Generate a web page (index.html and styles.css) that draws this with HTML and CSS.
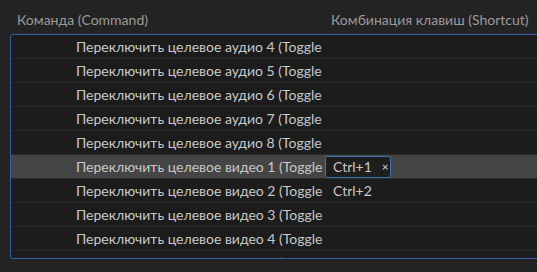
FILE: index.html
```html
<!DOCTYPE html>
<html lang="ru">
<head>
    <meta charset="UTF-8">
    <title>Комбинации клавиш</title>
    <link rel="stylesheet" href="styles.css">
</head>
<body>
    <div class="cabecalho">
        <div class="col-comando">Команда (Command)</div>
        <div class="col-atalho">Комбинация клавиш (Shortcut)</div>
    </div>

    <div class="lista">
        <div class="linha">
            <div class="comando">Переключить целевое аудио 4 (Toggle</div>
            <div class="atalho"></div>
        </div>
        <div class="linha">
            <div class="comando">Переключить целевое аудио 5 (Toggle</div>
            <div class="atalho"></div>
        </div>
        <div class="linha">
            <div class="comando">Переключить целевое аудио 6 (Toggle</div>
            <div class="atalho"></div>
        </div>
        <div class="linha">
            <div class="comando">Переключить целевое аудио 7 (Toggle</div>
            <div class="atalho"></div>
        </div>
        <div class="linha">
            <div class="comando">Переключить целевое аудио 8 (Toggle</div>
            <div class="atalho"></div>
        </div>
        <div class="linha ativa">
            <div class="comando">Переключить целевое видео 1 (Toggle</div>
            <div class="atalho">
                <span class="tecla-edicao">Ctrl+1 <span class="remover">&times;</span></span>
            </div>
        </div>
        <div class="linha">
            <div class="comando">Переключить целевое видео 2 (Toggle</div>
            <div class="atalho"><span class="tecla">Ctrl+2</span></div>
        </div>
        <div class="linha">
            <div class="comando">Переключить целевое видео 3 (Toggle</div>
            <div class="atalho"></div>
        </div>
        <div class="linha">
            <div class="comando">Переключить целевое видео 4 (Toggle</div>
            <div class="atalho"></div>
        </div>
        <div class="linha">
            <div class="comando">Переключить целевое видео 5 (Toggle</div>
            <div class="atalho"></div>
        </div>
    </div>
</body>
</html>
```

FILE: styles.css
```css
* {
    margin: 0;
    padding: 0;
    box-sizing: border-box;
    font-family: 'Lato', 'Open Sans', sans-serif;
}

body {
    background-color: #232323;
    color: #c8c8c8;
    font-size: 14px;
    overflow: hidden;
    padding-left: 10px;
}

.cabecalho {
    display: grid;
    grid-template-columns: 315px 1fr;
    height: 34px;
    padding-top: 11px;
    font-size: 14px;
    color: #9a9a9a;
}

.col-comando {
    padding-left: 7px;
}

.col-atalho {
    padding-left: 6px;
    white-space: nowrap;
}

.lista {
    width: calc(100% + 6px);
    height: 225px;
    border: 1px solid #2f63a3;
    border-radius: 3px;
    background-color: #1c1c1c;
    overflow: hidden;
}

.linha {
    display: grid;
    grid-template-columns: 314px 1fr;
    height: 24px;
    border-bottom: 1px solid #2a2a2a;
    align-items: center;
}

.linha.ativa {
    background-color: #454545;
}

.comando {
    padding-left: 65px;
    white-space: nowrap;
}

.atalho {
    display: flex;
    align-items: center;
    height: 100%;
}

.tecla {
    padding-left: 8px;
}

.tecla-edicao {
    display: flex;
    align-items: center;
    gap: 10px;
    height: 22px;
    width: 66px;
    padding-left: 7px;
    border: 1px solid #3b72b0;
    border-radius: 2px;
    background-color: #1e1e1e;
}

.remover {
    font-size: 12px;
    color: #d8d8d8;
}
```
